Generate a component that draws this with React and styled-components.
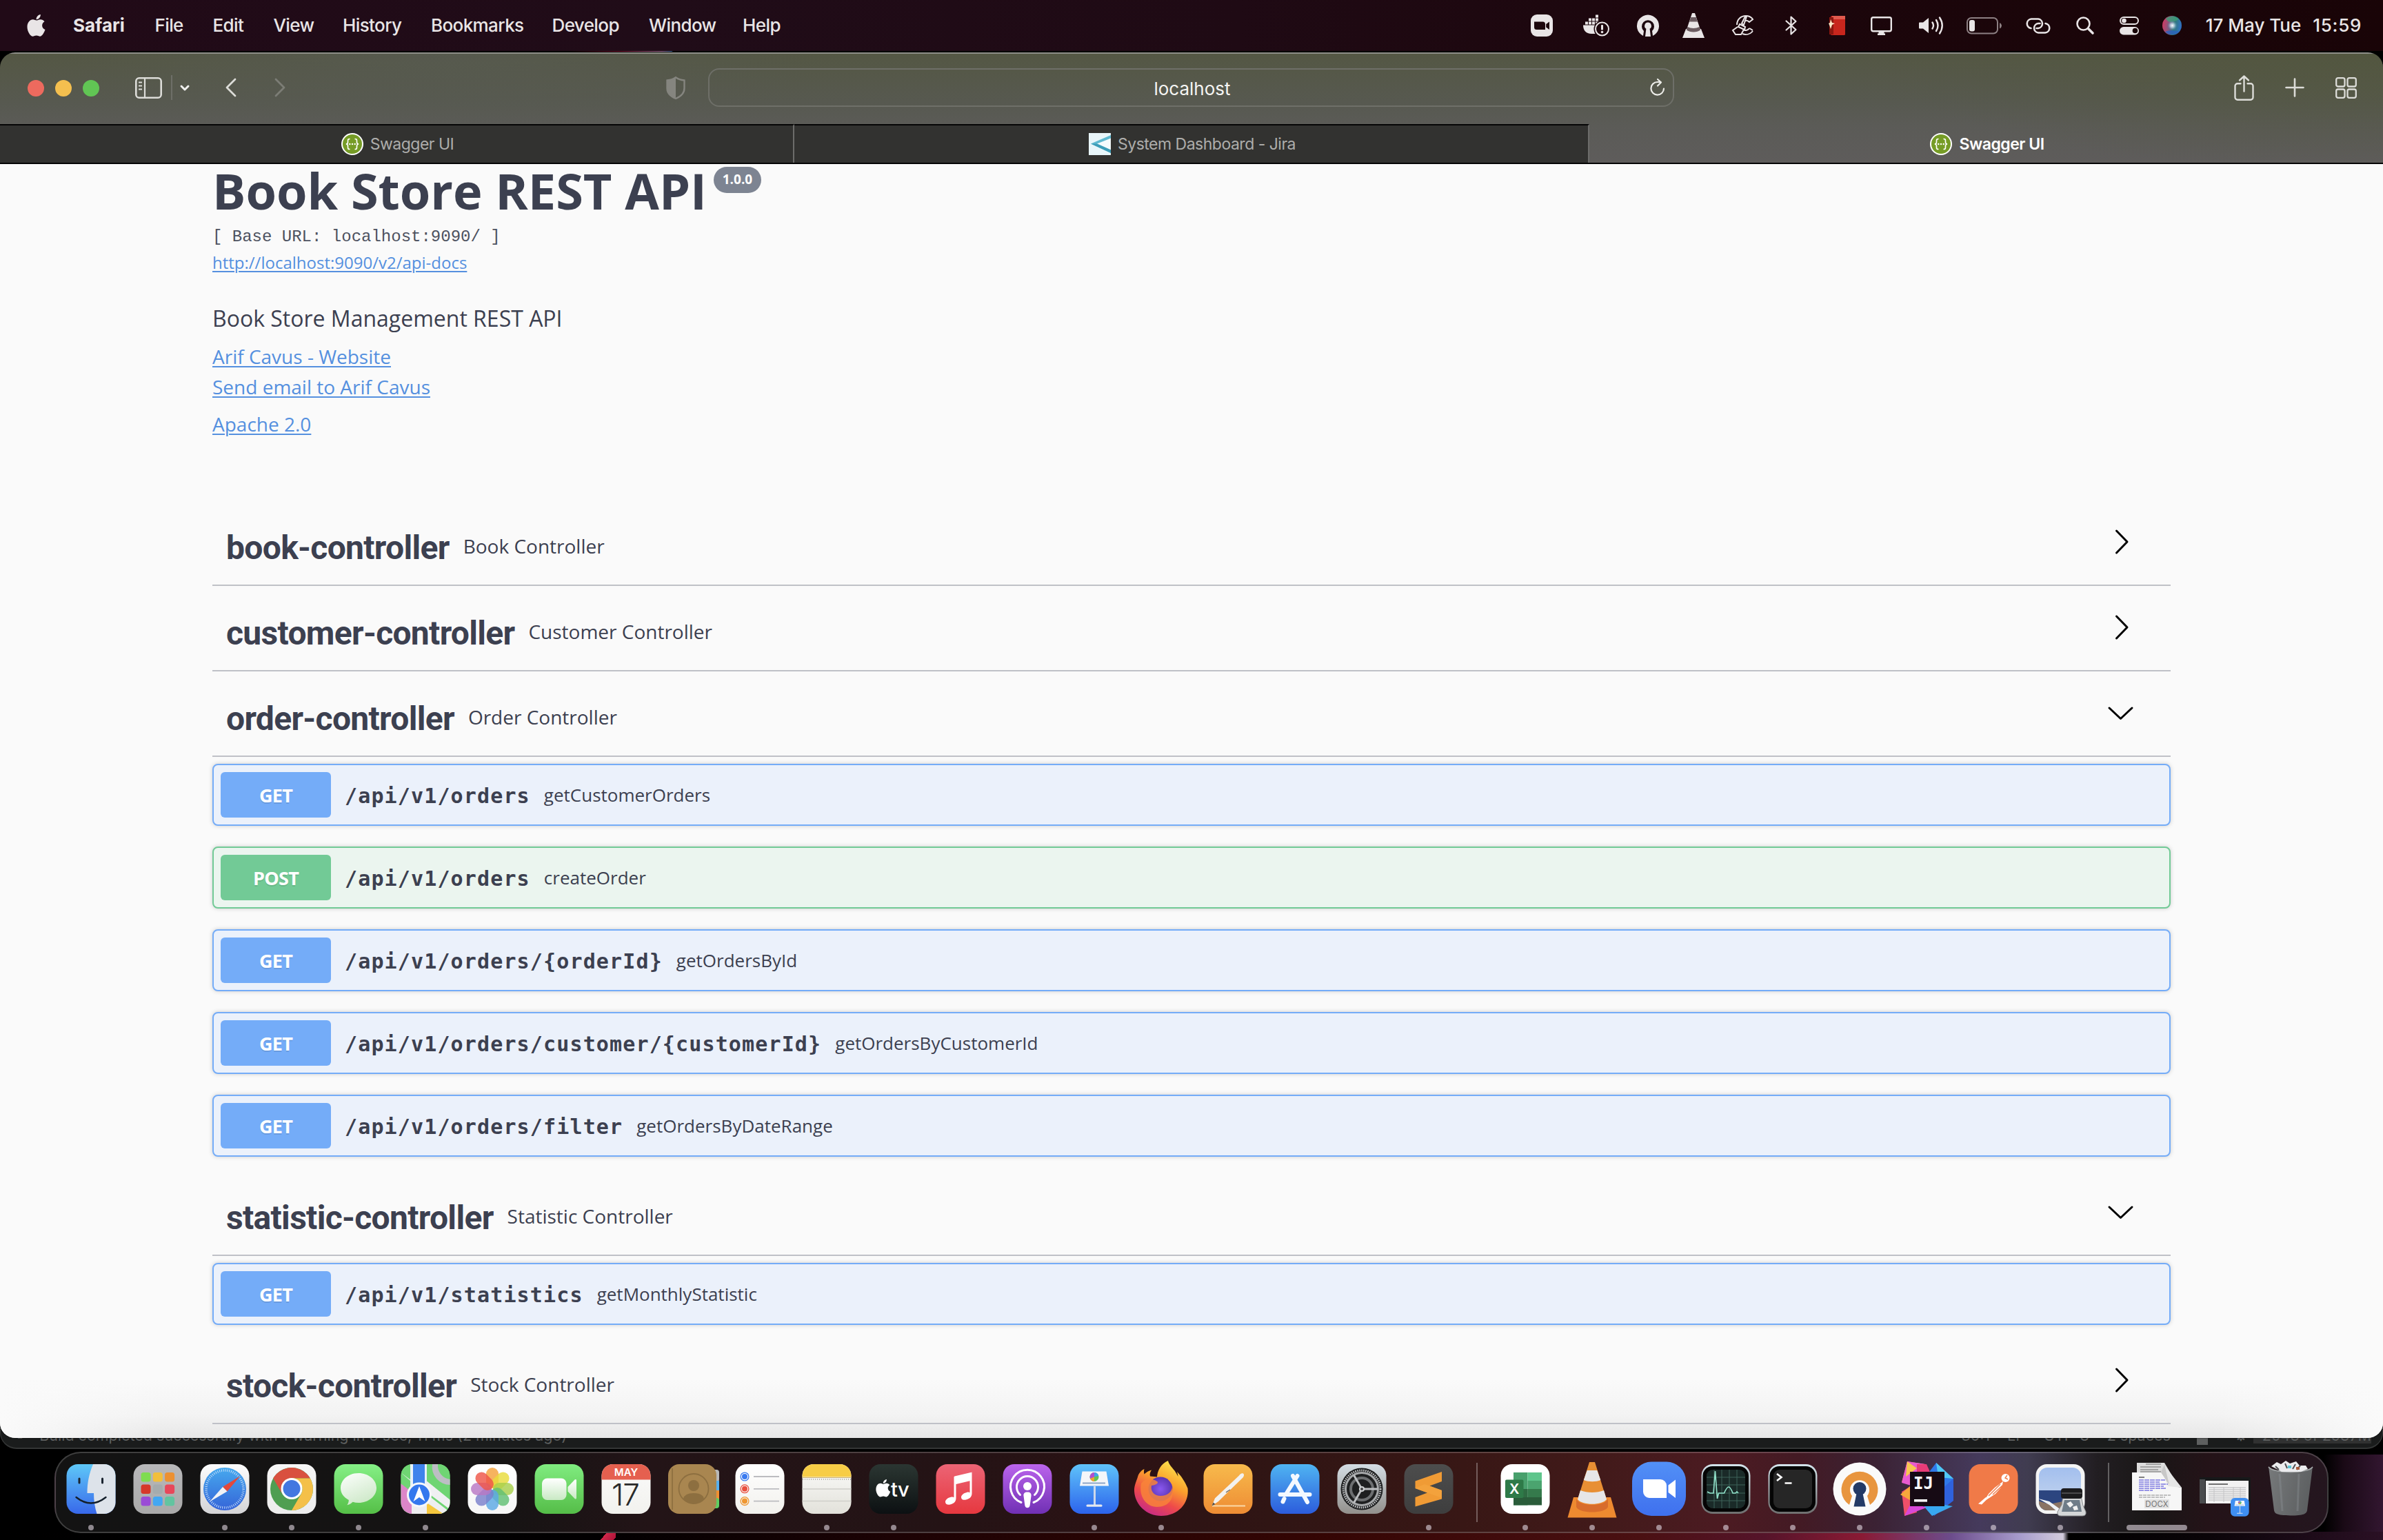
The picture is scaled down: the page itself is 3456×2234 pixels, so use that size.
import React from "react";
import styled, { createGlobalStyle } from "styled-components";

const ui = `Inter, "Liberation Sans", sans-serif`;
const body = `"Open Sans", "Noto Sans", sans-serif`;
const mono = `"DejaVu Sans Mono", "Liberation Mono", monospace`;
const ink = "#3c4050";

const Global = createGlobalStyle`
  *, *::before, *::after { box-sizing: border-box; }
  html, body { margin: 0; padding: 0; background: #000; overflow: hidden; }
  svg { display: block; overflow: visible; flex: none; }
`;

/* ---------- desktop ---------- */

const Desktop = styled.div`
  width: 3456px;
  height: 2234px;
  display: flex;
  flex-direction: column;
  overflow: hidden;
  font-family: ${ui};
  background:
    linear-gradient(128deg, transparent 50%, #d0284a 50%, #b0143a 90%, transparent 90%) 857px 2222px / 36px 14px no-repeat,
    linear-gradient(90deg, #000 0, #020001 880px, #1c0204 1300px, #330503 1900px, #4a1012 2380px, #55142a 2560px, #8a1a34 2700px, #6c4c8c 2830px, #a79ccc 2930px, #d2cbdc 2992px, #000 3000px, #0a0408 3200px, #2a1024 3456px) 0 2222px / 100% 12px no-repeat,
    linear-gradient(90deg, rgba(0,0,0,0) 3370px, #1a0a16 3400px, #321630 3456px) 0 2110px / 100% 124px no-repeat,
    linear-gradient(90deg, transparent 820px, #7a1830 900px, #a8789c 960px, #4070a0 974px, transparent 976px) 0 74px / 100% 1px no-repeat,
    #000;
`;

/* ---------- menu bar ---------- */

const MenuBar = styled.header`
  height: 74px;
  flex: none;
  display: flex;
  align-items: center;
  color: #e9e5e6;
  background: linear-gradient(90deg, #210a17 0%, #200c18 28%, #1f0a14 52%, #1c060c 72%, #190407 100%);
`;
const AppleSlot = styled.div`width: 106px; padding-left: 39px; flex: none;`;
const MenuItem = styled.div`
  width: ${(p) => p.$w}px;
  flex: none;
  font-size: 26px;
  line-height: 32px;
  font-weight: ${(p) => (p.$bold ? 700 : 500)};
  letter-spacing: ${(p) => (p.$bold ? 0 : -0.6)}px;
  white-space: nowrap;
`;
const StatusArea = styled.div`margin-left: auto; display: flex; align-items: center; padding-right: 31px;`;
const Status = styled.div`margin-right: ${(p) => p.$gap}px; flex: none;`;
const Clock = styled.div`
  display: flex;
  gap: 17px;
  font-size: 26px;
  line-height: 32px;
  font-weight: 500;
  white-space: pre;
`;
const Time = styled.span`letter-spacing: 0.7px;`;

/* ---------- browser window ---------- */

const Window = styled.main`
  margin-top: 2px;
  height: 2010px;
  flex: none;
  position: relative;
  z-index: 1;
  display: flex;
  flex-direction: column;
  border-radius: 22px;
  overflow: hidden;
  box-shadow: 0 0 2px #000;
`;
const Chrome = styled.div`
  height: 162px;
  flex: none;
  display: flex;
  flex-direction: column;
  border-top: 2px solid #8e8e88;
  border-bottom: 2px solid #050505;
  background:
    radial-gradient(ellipse 560px 130px at 640px 0, rgba(88, 91, 84, 0.6), transparent),
    radial-gradient(ellipse 700px 170px at 3420px 0, rgba(82, 86, 62, 0.75), transparent),
    linear-gradient(180deg, #545744 0, #575950 45%, #5b5b57 66%, #5e5c5b 100%);
`;
const Toolbar = styled.div`
  height: 102px;
  flex: none;
  display: flex;
  align-items: center;
  padding: 0 38px 4px 40px;
`;
const Lights = styled.div`display: flex; gap: 16px; margin-right: 52px; padding-top: 2px;`;
const Light = styled.span`width: 24px; height: 24px; border-radius: 50%; background: ${(p) => p.$c};`;
const Tool = styled.div`margin-right: ${(p) => p.$gap || 0}px; flex: none;`;
const Rule = styled.span`width: 2px; height: 36px; background: #6e6f68; margin-right: 11px;`;
const Address = styled.div`
  width: 1401px;
  height: 56px;
  flex: none;
  border: 2px solid #6e6f68;
  border-radius: 16px;
  display: grid;
  grid-template-columns: 60px 1fr 57px;
  align-items: center;
  font-size: 26px;
  color: #f4f4f2;
  text-align: center;
`;
const Host = styled.span`padding: 3px 0 0 0;`;
const Reload = styled.div`justify-self: end; padding-right: 11px;`;
const RightTools = styled.div`margin-left: auto; display: flex; align-items: center;`;

const Tabs = styled.nav`height: 56px; flex: none; display: grid; grid-template-columns: 1152px 1153px 1fr;`;
const Tab = styled.div`
  display: flex;
  align-items: center;
  justify-content: center;
  gap: 10px;
  padding-left: 3px;
  font-size: 23px;
  letter-spacing: -0.5px;
  color: ${(p) => (p.$active ? "#fff" : "#adadab")};
  font-weight: ${(p) => (p.$active ? 600 : 400)};
  background: ${(p) => (p.$active ? "transparent" : "#323230")};
  border-top: 2px solid ${(p) => (p.$active ? "transparent" : "#050505")};
  border-right: ${(p) => (p.$active ? 0 : 2)}px solid #6c6c6a;
`;

/* ---------- page ---------- */

const Page = styled.div`
  flex: 1;
  padding: 0 308px;
  color: ${ink};
  font-family: ${body};
  background:
    linear-gradient(90deg, #fafafa 0, rgba(250, 250, 250, 0) 240px, rgba(250, 250, 250, 0) 3216px, #fafafa 3456px),
    linear-gradient(180deg, #fafafa calc(100% - 84px), #f3f3f3 calc(100% - 34px), #e7e7e7 100%);
`;
const Info = styled.section`height: 498px; display: flex; flex-direction: column; align-items: flex-start;`;
const TitleRow = styled.div`display: flex; align-items: flex-start; height: 76px;`;
const Title = styled.h1`margin: 0; font-size: 72px; line-height: 76px; font-weight: 700;`;
const Version = styled.span`
  margin: 4px 0 0 10px;
  width: 69px;
  height: 38px;
  border-radius: 19px;
  background: #7d8492;
  color: #fff;
  font-size: 19px;
  line-height: 37px;
  font-weight: 700;
  text-align: center;
`;
const BaseUrl = styled.pre`
  margin: 12px 0 0;
  font-family: "Liberation Mono", monospace;
  font-size: 24px;
  line-height: 36px;
  color: #4d5260;
`;
const Link = styled.a`
  margin-top: ${(p) => p.$mt || 0}px;
  font-size: ${(p) => p.$size || 28}px;
  line-height: ${(p) => p.$lh || 44}px;
  color: #5590df;
  text-decoration: underline;
  text-decoration-thickness: 2px;
  text-underline-offset: 3px;
`;
const Description = styled.p`margin: 41px 0 11px; font-size: 32px; line-height: 44px;`;

const TagHeader = styled.div`
  height: 114px;
  display: flex;
  align-items: flex-start;
  padding: 0 52px 0 20px;
  border-bottom: 2px solid #bfc1c7;
  margin-bottom: 10px;
`;
const TagName = styled.h3`
  margin: 29px 0 0;
  font-family: Roboto, "Open Sans", sans-serif;
  font-size: 48px;
  line-height: 60px;
  font-weight: 700;
  letter-spacing: -0.68px;
`;
const TagText = styled.p`flex: 1; margin: 26px 0 0 20px; font-size: 28px; line-height: 60px;`;
const Arrow = styled.div`margin-top: 30px;`;

const Operation = styled.div`
  height: 90px;
  margin-bottom: 30px;
  padding: 0 10px;
  display: flex;
  align-items: center;
  border: 2px solid ${(p) => (p.$post ? "#72ca96" : "#74acf8")};
  border-radius: 8px;
  background: ${(p) => (p.$post ? "#ebf5ef" : "#ebf1fb")};
  box-shadow: 0 0 6px rgba(0, 0, 0, 0.19);
`;
const Method = styled.span`
  width: 160px;
  height: 66px;
  border-radius: 6px;
  flex: none;
  background: ${(p) => (p.$post ? "#72ca96" : "#74acf8")};
  color: #fff;
  font-size: 27px;
  line-height: 67px;
  font-weight: 700;
  letter-spacing: -0.7px;
  text-align: center;
  text-shadow: 0 2px 0 rgba(0, 0, 0, 0.1);
`;
const Path = styled.span`
  padding: 4px 20px 0;
  font-family: ${mono};
  font-size: 30px;
  letter-spacing: 1.14px;
  line-height: 40px;
  font-weight: 700;
  white-space: pre;
`;
const Summary = styled.span`font-size: 26px; line-height: 40px;`;

/* ---------- window behind ---------- */

const Behind = styled.div`
  height: 56px;
  margin-top: -40px;
  flex: none;
  display: flex;
  align-items: flex-end;
  padding: 0 16px 6px 22px;
  overflow: hidden;
  background: #1a1c1c;
  border: 1px solid #3a3c3c;
  border-bottom: 2px solid #343636;
  border-radius: 0 0 24px 24px;
  color: #5e6060;
  font-size: 21.5px;
  line-height: 24px;
  white-space: pre;
`;
const BehindCell = styled.span`margin-right: ${(p) => p.$gap || 0}px;`;
const Spacer = styled.span`flex: 1;`;
const Lock = styled.span`width: 16px; height: 12px; background: #5e6060; margin: 0 38px -2px 38px;`;
const Memory = styled.span`height: 24px; background: #303131; padding-left: 13px; margin-left: 8px;`;

/* ---------- dock ---------- */

const Dock = styled.footer`
  width: 3298px;
  height: 118px;
  margin: 4px auto 0;
  flex: none;
  display: flex;
  justify-content: center;
  padding-right: 2px;
  border: 2px solid rgba(255, 255, 255, 0.19);
  border-radius: 38px;
  background: linear-gradient(90deg, #131313 0, #151313 640px, #231417 860px, #241315 1300px, #2c1214 1560px, #301514 1760px, #381715 2040px, #421a1a 2240px, #4c1b22 2420px, #431a24 2530px, #3b2234 2640px, #453a5c 2790px, #403c50 2860px, #221e22 2960px, #191616 3040px, #241318 3120px, #24161f 3298px);
`;
const DockItem = styled.div`
  width: 97px;
  display: flex;
  flex-direction: column;
  align-items: center;
  padding-top: 16px;
`;
const Dot = styled.span`
  width: ${(p) => (p.$wide ? 88 : 8)}px;
  height: 8px;
  margin-top: 16px;
  border-radius: 4px;
  background: rgba(225, 215, 225, 0.6);
`;
const DockRule = styled.div`width: 2px; height: 86px; margin: 14px 21px 0 20px; background: rgba(255, 255, 255, 0.3);`;

/* ---------- menu bar icons ---------- */

const M = "#e9e5e6";

const Apple = ({ w = 27, h = 33, c = M }) => (
  <svg width={w} height={h} viewBox="0 0 27 33">
    <path fill={c} d="M13.800 8.600c1.600 0 3.400-1.500 6-1.400 2.300.1 4.300 1.100 5.700 3-4.900 3.100-4.300 9.600 1 11.900-1 3-4 9.600-7.500 9.700-2 0-2.800-1.200-5.200-1.200s-3.300 1.200-5.200 1.200C5 31.900.5 24.500.5 18c0-6.700 4.100-10.600 8.100-10.700 2.300 0 3.900 1.300 5.200 1.300zM13.600 7.300C13.300 3.800 16.400.4 19.800 0c.4 3.700-2.900 7.200-6.200 7.300z" />
  </svg>
);
const ZoomStatus = () => (
  <svg width="32" height="32">
    <rect width="32" height="32" rx="9" fill={M} />
    <path d="M5 10.500h12.500a3.500 3.500 0 0 1 3.500 3.500v8H8.500A3.500 3.500 0 0 1 5 18.500zM27 10.500v11.500l-4.800-3.600v-4.300z" fill="#1c060c" />
  </svg>
);
const Docker = () => (
  <svg width="38" height="32" fill={M}>
    <path d="M0 15.500h22c-4 4-4 8-2 12.500H12C4 28 0 23 0 15.500z" />
    {[[3, 10.5], [8, 10.5], [13, 10.5], [8, 5.5], [13, 5.5], [18, 5.5], [18, 0.5], [18, 10.5]].map(([x, y]) => (
      <rect key={x + "-" + y} x={x} y={y} width="4" height="4" />
    ))}
    <circle cx="27.500" cy="21" r="12" fill="#1c060c" />
    <circle cx="27.500" cy="21" r="9.500" fill="none" stroke={M} strokeWidth="2" />
    <rect x="26" y="15" width="3" height="7.500" rx="1" />
    <circle cx="27.500" cy="25.500" r="1.800" />
  </svg>
);
const Vpn = () => (
  <svg width="32" height="32" fill={M}>
    <path d="M9 31A16 16 0 1 1 23 31L22 24a9 9 0 1 0-12 0z" />
    <path d="M16 11.500a5 5 0 0 1 2.600 9.200L20 32h-8l1.400-11.300A5 5 0 0 1 16 11.500z" />
  </svg>
);
const Cone = () => (
  <svg width="32" height="36">
    <path d="M5 23h22l5 13H0z" fill={M} />
    <path d="M14 0h4l8 24c-5 4-15 4-20 0z" fill={M} />
    <path d="M12.300 6h7.400l2.300 6.500H10zM7.500 20c5 2.500 12 2.500 17 0l1.600 4.500c-5 4-15 4-20.200 0z" fill="#6b5b60" />
  </svg>
);
const Cleaner = () => (
  <svg width="32" height="30" fill="none" stroke={M} strokeWidth="2">
    <path d="M7 14C7 6 13 1 20 1c4 0 8 2 10 5l-5 4c-2-2-5-3-7-1M30 23c-4 5-10 6-15 4M25 19l5 3M16 21c3 2 7 1 9-2" />
    <path d="M19 2l-5 10 3 2 4-12zM11 13l8 4-1 4-9-4zM8 17l-7 5 4 6h8l4-7" />
  </svg>
);
const Bluetooth = () => (
  <svg width="17" height="28" fill="none" stroke={M} strokeWidth="2.200" strokeLinejoin="round" strokeLinecap="round">
    <path d="M1.500 7.500l14 12.500-7 6.500v-25l7 6.500-14 12.500" />
  </svg>
);
const RedBook = () => (
  <svg width="24" height="30">
    <rect x="3" y="1" width="21" height="28" rx="1.500" fill="#c8261d" />
    <rect x="5" y="1" width="19" height="5" fill="#e05a4e" />
    <rect x="1" y="3" width="6" height="25" fill="#8c1710" />
    <path d="M3 6l2 5 4 1-4 2-2 6-2-6-1-2 2-1z" fill="#fbe9c8" />
  </svg>
);
const Display = () => (
  <svg width="31" height="27">
    <rect x="1.200" y="1.200" width="28.600" height="20" rx="2.500" fill="none" stroke={M} strokeWidth="2.400" />
    <path d="M11.500 21h8v3.500h1.500V27h-11v-2.500h1.500z" fill={M} />
  </svg>
);
const Speaker = () => (
  <svg width="36" height="26" fill="none" stroke={M} strokeWidth="2.400" strokeLinecap="round">
    <path d="M2 8.500h5L15 2v22l-8-6.500H2a1 1 0 0 1-1-1v-7a1 1 0 0 1 1-1z" fill={M} stroke="none" />
    <path d="M20.500 8.500q3 4.500 0 9M26 5q5 8 0 16M31 1.500q7.500 11.500 0 23" />
  </svg>
);
const Battery = () => (
  <svg width="51" height="25">
    <rect x="1" y="1" width="44" height="22.500" rx="6" fill="none" stroke="#8d8083" strokeWidth="2" />
    <rect x="4" y="4" width="8" height="16.500" rx="3" fill={M} />
    <path d="M48 8v8.500q3-1.500 3-4.200T48 8z" fill="#8d8083" />
  </svg>
);
const Chain = () => (
  <svg width="36" height="23" fill="none" stroke={M} strokeWidth="2.600" strokeLinecap="round">
    <path d="M7.500 15A6.800 6.800 0 0 1 8 1.500h10a6.800 6.800 0 0 1 0 13.500h-2.500" />
    <path d="M28.500 8A6.800 6.800 0 0 1 28 21.500H18A6.800 6.800 0 0 1 18 8h2.500" />
  </svg>
);
const Search = () => (
  <svg width="26" height="26" fill="none" stroke={M} strokeLinecap="round">
    <circle cx="10.500" cy="10.500" r="9" strokeWidth="2.600" />
    <path d="M17.500 17.500l6.500 6.500" strokeWidth="3.600" />
  </svg>
);
const Controls = () => (
  <svg width="28" height="26">
    <rect x="1" y="1" width="26" height="10" rx="5" fill="none" stroke={M} strokeWidth="2" />
    <circle cx="6.500" cy="6" r="3.300" fill={M} />
    <rect y="15" width="28" height="11.500" rx="5.700" fill={M} />
    <circle cx="22.500" cy="20.500" r="3.800" fill="#190407" />
  </svg>
);
const Siri = () => (
  <svg width="28" height="28">
    <defs>
      <radialGradient id="siri"><stop offset="0" stopColor="#fff" /><stop offset="0.400" stopColor="#c4dcee" stopOpacity="0.700" /><stop offset="1" stopColor="#2a5a90" stopOpacity="0" /></radialGradient>
      <linearGradient id="siri2" x1="0" y1="0.400" x2="1" y2="0.600"><stop offset="0" stopColor="#d03a64" /><stop offset="0.400" stopColor="#7b5c80" /><stop offset="0.600" stopColor="#2f7c74" /><stop offset="1" stopColor="#2f6ecb" /></linearGradient>
    </defs>
    <circle cx="14" cy="14" r="14" fill="url(#siri2)" />
    <path d="M5 4a14 14 0 0 1 19 1q-8 4-12 4t-7-5z" fill="#3f9c78" opacity=".8" />
    <path d="M4 23q10-4 20 0a14 14 0 0 1-20 0z" fill="#2a62c0" opacity=".8" />
    <circle cx="14.500" cy="14" r="8" fill="url(#siri)" />
  </svg>
);

/* ---------- toolbar icons ---------- */

const T = "#dcdcd8";
const SidebarIcon = () => (
  <svg width="39" height="31" fill="none" stroke={T} strokeWidth="2.600">
    <rect x="1.300" y="1.300" width="36.400" height="28.400" rx="4.500" />
    <path d="M14 1v29M5 7.500h5M5 12.500h5M5 17.500h5" strokeWidth="2.200" />
  </svg>
);
const SmallDown = () => (
  <svg width="14" height="9" fill="none" stroke="#f0f0ee" strokeWidth="3" strokeLinecap="round" strokeLinejoin="round"><path d="M2 2l5 5 5-5" /></svg>
);
const Chev = ({ flip, c }) => (
  <svg width="16" height="28" fill="none" stroke={c} strokeWidth="2.800" strokeLinecap="round" strokeLinejoin="round">
    <path d={flip ? "M2 2l12 12L2 26" : "M14 2L2 14l12 12"} />
  </svg>
);
const Shield = () => (
  <svg width="28" height="33">
    <path d="M14 1.300C10.500 4 6 5.200 1.500 5.500V17c0 7 5 12 12.500 15 7.500-3 12.500-8 12.500-15V5.500C22 5.200 17.500 4 14 1.300z" fill="none" stroke="#85857f" strokeWidth="2.400" />
    <path d="M14 1.300C10.500 4 6 5.200 1.500 5.500V17c0 7 5 12 12.500 15z" fill="#85857f" />
  </svg>
);
const ReloadIcon = () => (
  <svg width="22" height="26" fill="none" stroke="#ecece8" strokeWidth="2.200" strokeLinecap="round" strokeLinejoin="round">
    <path d="M20 14.500A9.300 9.300 0 1 1 10.800 5h5M11 1l5 4.500-5 5" />
  </svg>
);
const Share = () => (
  <svg width="29" height="37" fill="none" stroke={T} strokeWidth="2.400" strokeLinecap="round" strokeLinejoin="round">
    <path d="M9.500 12.200H5A3.500 3.500 0 0 0 1.500 15.700v16.500A3.500 3.500 0 0 0 5 35.700h19a3.500 3.500 0 0 0 3.500-3.500V15.700a3.500 3.500 0 0 0-3.500-3.500h-4.500M14.500 23.500V1.500M8 7.500l6.500-6 6.500 6" />
  </svg>
);
const Plus = () => (
  <svg width="28" height="28" stroke={T} strokeWidth="2.600" strokeLinecap="round"><path d="M14 1.500v25M1.500 14h25" /></svg>
);
const Grid = () => (
  <svg width="31" height="31" fill="none" stroke={T} strokeWidth="2.300">
    {[[1.2, 1.2], [17.5, 1.2], [1.2, 17.5], [17.5, 17.5]].map(([x, y]) => <rect key={x + "," + y} x={x} y={y} width="12.300" height="12.300" rx="2.500" />)}
  </svg>
);
const SwaggerIcon = () => (
  <svg width="32" height="32">
    <circle cx="16" cy="16" r="16" fill="#fff" />
    <circle cx="16" cy="16" r="14" fill="#769c26" />
    <path d="M12.500 8.500c-3 0-3 1-3 3.500s0 3.500-2.500 4c2.500.5 2.500 1.500 2.500 4s0 3.500 3 3.500M19.500 8.500c3 0 3 1 3 3.500s0 3.500 2.500 4c-2.500.5-2.500 1.500-2.500 4s0 3.500-3 3.500" fill="none" stroke="#fff" strokeWidth="1.700" />
    <g fill="#fff"><circle cx="12.300" cy="16" r="1.200" /><circle cx="16" cy="16" r="1.200" /><circle cx="19.700" cy="16" r="1.200" /></g>
  </svg>
);
const JiraIcon = () => (
  <svg width="32" height="32">
    <rect width="32" height="32" fill="#e9f6fa" />
    <path d="M32 3L3 15.500 32 29z" fill="#5fb9d0" />
    <path d="M32 7.500L12 15.500 32 24.500z" fill="#f5fbfd" />
    <path d="M3 15.500L32 29v-4.500L12 15.500z" fill="#3d9db8" />
  </svg>
);
const TagArrow = ({ open }) => (
  <svg width="40" height="40" fill="none" stroke="#000" strokeWidth="3" strokeLinecap="round" strokeLinejoin="round">
    <path d={open ? "M3 13l16.500 15.500L36 13" : "M13.500 4l15.500 16-15.500 16"} />
  </svg>
);

/* ---------- dock icons, each on a 72 x 72 tile ---------- */

const LG = ({ id, from, to, x2 = 0, y2 = 1 }) => (
  <linearGradient id={id} x1="0" y1="0" x2={x2} y2={y2}><stop offset="0" stopColor={from} /><stop offset="1" stopColor={to} /></linearGradient>
);
const Tile = ({ id, from, to = from, children }) => (
  <svg width="72" height="72" viewBox="0 0 72 72">
    <defs>
      <LG id={id} from={from} to={to} />
      <clipPath id={id + "c"}><rect x="0.500" width="71" height="72" rx="16.500" /></clipPath>
    </defs>
    <g clipPath={`url(#${id}c)`}>
      <rect width="72" height="72" fill={`url(#${id})`} />
      {children}
    </g>
  </svg>
);
const Free = ({ children }) => <svg width="72" height="72" viewBox="0 0 72 72">{children}</svg>;

const Finder = () => (
  <Tile id="finder" from="#5ec8f8" to="#3868ea">
    <path d="M39 0C33 14 30.500 28 30.500 42H40c0 11 1.500 21 4.500 30H72V0z" fill="#dde3ea" />
    <path d="M19 21v6M52.500 21v6" stroke="#1a2430" strokeWidth="3" strokeLinecap="round" />
    <path d="M14.500 48q21.500 17 43 0" stroke="#14202c" strokeWidth="2.400" fill="none" strokeLinecap="round" />
  </Tile>
);
const Launchpad = () => (
  <Tile id="lp" from="#b8b8ba" to="#aaaaaa">
    {["#7fdc50", "#f2bf3c", "#ec9132", "#d6382a", "#a5abad", "#e8475a", "#9a4bd6", "#43a7f2", "#62c4a0"].map((c, i) => (
      <rect key={c} x={11.5 + (i % 3) * 17.3} y={12 + Math.floor(i / 3) * 17.5} width="14" height="13.500" rx="3.500" fill={c} />
    ))}
  </Tile>
);
const SafariIcon = () => (
  <Tile id="sf" from="#fdfdfd" to="#d4d4d6">
    <defs><LG id="sf2" from="#46a9ee" to="#3564d8" /></defs>
    <circle cx="36" cy="36" r="31" fill="url(#sf2)" />
    <circle cx="36" cy="36" r="27" fill="none" stroke="#cfe3fa" strokeWidth="3.500" strokeDasharray="0.900 1.930" />
    <path d="M58.500 17L39.500 39.500 33 33z" fill="#e3483b" />
    <path d="M14 54.500L33 33l6.500 6.500z" fill="#f1f3f6" />
  </Tile>
);
const ChromeIcon = () => (
  <Tile id="ch" from="#f6f6f6" to="#ececec">
    <circle cx="36" cy="36" r="31" fill="#4f9e52" />
    <path d="M9.200 20.500A31 31 0 0 1 62.800 20.500H36a15.500 15.500 0 0 0-13.400 23.200z" fill="#d9503f" />
    <path d="M62.800 20.500A31 31 0 0 1 36 67l13.400-23.200A15.500 15.500 0 0 0 36 20.500z" fill="#f4c049" />
    <circle cx="36" cy="35.500" r="15.500" fill="#fff" />
    <circle cx="36" cy="35.500" r="12.500" fill="#4377e0" />
  </Tile>
);
const Messages = () => (
  <Tile id="ms" from="#85f086" to="#55bf47">
    <defs><LG id="ms2" from="#fdfffd" to="#cfe9ca" x2={0.5} /></defs>
    <path d="M36 13c14.500 0 26 9.600 26 21.500S50.500 56 36 56c-3 0-5.800-.4-8.400-1.200-2.200 2.400-5 4-8.300 4.500 1.600-2.200 2.500-4.700 2.500-7.400C14 48 10 41.700 10 34.500 10 22.600 21.500 13 36 13z" fill="url(#ms2)" />
  </Tile>
);
const Maps = () => (
  <Tile id="mp" from="#66cf6a">
    <path d="M0 0h72v72H0z" fill="#6fd573" />
    <path d="M0 12L72 66v-14L30 18V0H14v24L0 12z" fill="#f0f0f2" />
    <path d="M0 28l16 12v32H0z" fill="#dc86c8" />
    <path d="M16 42h20l36 28v2H16z" fill="#eeeef0" />
    <path d="M38 56l24 16H38z" fill="#f5c73e" />
    <path d="M72 30A26 26 0 0 1 46 0h8a20 20 0 0 0 18 22z" fill="#bdbec4" />
    <path d="M18 0v60h17V0z" fill="#3f83ec" />
    <path d="M14 0h4v40h-4zM35 0h3v34h-3z" fill="#e8f0f8" />
    <circle cx="27" cy="44.500" r="18" fill="#f5f7fa" />
    <circle cx="27" cy="44.500" r="15" fill="#3478ee" />
    <path d="M27 32l8.500 22-8.500-6-8.500 6z" fill="#fff" />
  </Tile>
);
const Photos = () => (
  <Tile id="ph" from="#ffffff" to="#f6f6f6">
    {["#f4a23c", "#e8dc3c", "#a8d04c", "#62bf74", "#5ca8e4", "#7a80cc", "#b878c4", "#ee5548"].map((c, i) => (
      <rect key={c} x="27" y="5" width="18" height="30" rx="9" fill={c} opacity=".82" transform={`rotate(${i * 45} 36 36)`} />
    ))}
  </Tile>
);
const FaceTime = () => (
  <Tile id="ft" from="#80ec80" to="#55bd48">
    <defs><LG id="ft2" from="#fff" to="#c9e9c4" /></defs>
    <rect x="11" y="20.500" width="35.500" height="31.500" rx="7.500" fill="url(#ft2)" />
    <path d="M48.500 33l10-10.500c1.200-1 2.500-.5 2.500 1v25.500c0 1.500-1.300 2-2.500 1l-10-10.500z" fill="url(#ft2)" />
  </Tile>
);
const Calendar = () => (
  <Tile id="cal" from="#fafafa" to="#f2f2ee">
    <rect width="72" height="22.500" fill="#e5604f" />
    <text x="36" y="17" textAnchor="middle" fontFamily={ui} fontSize="15" fontWeight="600" fill="#fff">MAY</text>
    <text x="35" y="60" textAnchor="middle" fontFamily={ui} fontSize="44" fontWeight="300" letterSpacing="-1" fill="#2a2a2a">17</text>
  </Tile>
);
const Contacts = () => (
  <Free>
    <rect x="58" y="8" width="16" height="18" rx="4" fill="#b9b9b9" />
    <rect x="58" y="24" width="16" height="15" fill="#58b0ee" />
    <rect x="58" y="38" width="16" height="14" fill="#f09032" />
    <rect x="58" y="49" width="16" height="15" rx="4" fill="#5fce62" />
    <rect x="0" width="70" height="72" rx="16" fill="#a98650" />
    <path d="M6 6v60" stroke="#8a6b3c" strokeWidth="1.500" />
    <circle cx="37" cy="35.500" r="21.500" fill="none" stroke="#8d6f40" strokeWidth="1.800" />
    <circle cx="37" cy="31" r="8" fill="#8d6f40" />
    <path d="M22 50q2-8 15-8t15 8q-6 7.500-15 7.500T22 50z" fill="#8d6f40" />
  </Free>
);
const Reminders = () => (
  <Tile id="rm" from="#ffffff" to="#f2f1ed">
    {["#3a7bf0", "#e8503f", "#ef9732"].map((c, i) => (
      <g key={c}>
        <circle cx="14" cy={18 + i * 17.8} r="5.900" fill="none" stroke={c} strokeWidth="1.300" />
        <circle cx="14" cy={18 + i * 17.8} r="4" fill={c} />
        <path d={`M27 ${18 + i * 17.8}h37`} stroke="#bcbcc0" strokeWidth="1.800" />
      </g>
    ))}
  </Tile>
);
const Notes = () => (
  <Tile id="nt" from="#fcfcfa" to="#e2e1da">
    <rect width="72" height="18.500" fill="#f7cd46" />
    <path d="M0 19.500h72" stroke="#c9b27a" strokeWidth="1.200" />
    <path d="M1 22h71" stroke="#b5b4ae" strokeWidth="2" strokeDasharray="1 2" />
    <path d="M0 36h72M0 53.500h72" stroke="#cfcec9" strokeWidth="1.500" />
  </Tile>
);
const TV = () => (
  <Tile id="tv" from="#2b3632" to="#0c1012">
    <g transform="translate(10 22) scale(.8)"><path fill="#fff" d="M13.800 8.600c1.600 0 3.400-1.500 6-1.400 2.300.1 4.300 1.100 5.700 3-4.900 3.100-4.300 9.600 1 11.900-1 3-4 9.600-7.500 9.700-2 0-2.800-1.200-5.200-1.200s-3.300 1.200-5.200 1.200C5 31.900.5 24.500.5 18c0-6.700 4.100-10.600 8.100-10.700 2.300 0 3.900 1.300 5.200 1.300zM13.600 7.300C13.300 3.800 16.400.4 19.800 0c.4 3.700-2.900 7.200-6.200 7.300z" /></g>
    <text x="32" y="47" fontFamily={ui} fontSize="29" fontWeight="500" letterSpacing="-0.500" fill="#fff">tv</text>
  </Tile>
);
const Music = () => (
  <Tile id="mu" from="#ec6475" to="#e6383f">
    <path d="M53 11.500L27.500 17.500c-.7.200-1 .6-1 1.300v29.400c-1-.8-2.500-.9-4.500-.4-4.500 1-8 3.800-8 7 0 3 3 4.600 7 3.700 5-1.100 8.500-4 8.500-9V29l20-4.700v17c-1-.8-2.500-.9-4.500-.4-4.500 1-8 3.800-8 7 0 3 3 4.600 7 3.700 5-1.100 8.500-4 8.500-9V13c0-1.200-.5-1.700-1.500-1.500z" fill="#fff" />
  </Tile>
);
const Podcasts = () => (
  <Tile id="pc" from="#bb64ec" to="#7030b4">
    <g fill="none" stroke="#fff" strokeWidth="3" strokeLinecap="round">
      <path d="M27 55.500a24.500 24.500 0 1 1 18 0" /><path d="M25.500 44.500a15.500 15.500 0 1 1 21 0" />
    </g>
    <circle cx="36" cy="32" r="6" fill="#fff" />
    <path d="M36 40.500c4 0 6 2 5.500 5.500l-1.800 13.500c-.3 2.400-1.500 3.800-3.700 3.800s-3.400-1.400-3.700-3.800L30.500 46c-.5-3.500 1.500-5.500 5.500-5.500z" fill="#fff" />
  </Tile>
);
const KeynoteArt = () => (
  <>
    <path d="M35 32h3v28h-3z" fill="#cdd8ea" /><rect x="24.500" y="58.500" width="23" height="3.200" rx="1.500" fill="#e4e8f0" />
    <path d="M18.500 10.500h35l3.500 21H15z" fill="#f4f6f9" /><path d="M19 27.500h33" stroke="#8ea6c8" strokeWidth="1.800" />
    <circle cx="36" cy="18.500" r="6.500" fill="#62c454" /><path d="M36 18.500V12a6.500 6.500 0 0 1 6.300 5z" fill="#3fa3e8" /><path d="M36 18.500L30 21a6.500 6.500 0 0 1 6-9z" fill="#b04fd0" /><path d="M36 18.500l-6 2.500q2 4 6 4z" fill="#f0a030" />
  </>
);
const Keynote = () => <Tile id="kn" from="#5fc3fa" to="#2c63ec"><KeynoteArt /></Tile>;
const Firefox = () => (
  <Free>
    <defs>
      <linearGradient id="ff" x1=".8" y1="0" x2=".3" y2="1"><stop offset="0" stopColor="#fdec52" /><stop offset=".4" stopColor="#fba02c" /><stop offset=".7" stopColor="#ee4a4a" /><stop offset="1" stopColor="#c62a88" /></linearGradient>
      <radialGradient id="ff2"><stop offset="0" stopColor="#8a58f0" /><stop offset="1" stopColor="#5a35b0" /></radialGradient>
    </defs>
    <path d="M46-5c1 5 5 9 9.500 14.500 2 3 3.500 5.500 5 8.500-.2-2.600-.7-5-1.500-7 6 6 12 15 15.500 24C77 56 61 75 36 75 15 75-2 59-3 39c-.3-8 3-14 5-20.500 1-4 4-9 9.500-11.500-.8 3-.5 5 0 7.500 3-3 6.500-5 10.500-6-2 3-3 6-2 9 3 .2 7 .8 10 1 .5-8 5-19 16-23.500z" fill="url(#ff)" />
    <circle cx="35" cy="36" r="17.500" fill="url(#ff2)" />
    <path d="M7 28c6-8 16-8 23-3 4 3-5 6-8 6-2 9 5 15 13 15 10 0 17-6 17-14 4 18-5 30-22 30C14 62 3 46 7 28z" fill="#f8843a" opacity=".85" />
  </Free>
);
const Pages = () => (
  <Tile id="pg" from="#f7ba4c" to="#ee8c34">
    <path d="M13 60.500h48" stroke="#fbd9a8" strokeWidth="2" />
    <path d="M12.500 60.500l4.500-11L52 16.500c1.500-2.500 4-4 6-3 1.500 1 1.500 3.500-.5 6L22 54z" fill="#f3f1ee" /><path d="M33 41l6-4" stroke="#7c7468" strokeWidth="1.500" /><path d="M12.500 60.500l2-5 3 2.500z" fill="#55504a" />
  </Tile>
);
const AppStore = () => (
  <Tile id="as" from="#4fb4f2" to="#2c5cdc">
    <g stroke="#f4f9ff" strokeWidth="6" strokeLinecap="round"><path d="M39.500 17L23 43.500M33 17l21 38M14.500 44h43" /><path d="M20.500 50l-2 4.500" /></g>
  </Tile>
);
const Settings = () => (
  <Tile id="st" from="#d4dde4" to="#92908c">
    <circle cx="36" cy="36" r="30.500" fill="#1e1f20" />
    <circle cx="36" cy="36" r="27" fill="none" stroke="#c0c2c4" strokeWidth="3" strokeDasharray="1.600 1.400" />
    <circle cx="36" cy="36" r="23.500" fill="none" stroke="#a6a8aa" strokeWidth="3" />
    <circle cx="36" cy="36" r="16" fill="none" stroke="#6c6e70" strokeWidth="4" />
    <path d="M36 36h23M36 36L24.500 16M36 36L24.500 56" stroke="#bcbec0" strokeWidth="3" />
    <circle cx="36" cy="36" r="4" fill="#d0d2d4" /><circle cx="36" cy="36" r="2" fill="#444" />
  </Tile>
);
const Sublime = () => (
  <Tile id="sb" from="#4d4d4d" to="#3e3e3e">
    <path d="M55 11v14L37.500 31.500 55 38v12.500L16.500 61.500V48L34 41.500 16.500 35V24.500z" fill="#f09b35" />
    <path d="M16.500 35L55 49V38L30 29z" fill="#f3a23c" />
  </Tile>
);
const Excel = () => (
  <Tile id="ex" from="#ffffff">
    <rect x="19" y="12" width="20.500" height="47.500" fill="#48a06c" /><rect x="39.500" y="12" width="20.500" height="12" fill="#5fc58c" /><rect x="39.500" y="24" width="20.500" height="12" fill="#4ba46f" /><rect x="39.500" y="36" width="20.500" height="12" fill="#357a4c" /><rect x="19" y="48" width="41" height="11.500" fill="#2a5c3a" /><rect x="19" y="36" width="20.500" height="12" fill="#2e6b42" />
    <rect x="7" y="22.500" width="26.500" height="26.500" rx="2" fill="#2e7a48" />
    <text x="20.200" y="43" textAnchor="middle" fontFamily={ui} fontSize="20" fontWeight="600" fill="#fff">X</text>
  </Tile>
);
const VLC = () => (
  <Free>
    <path d="M9 48h54l8.500 29.500H.5z" fill="#ee8a30" />
    <path d="M13 50c4 12 42 12 46 0v12c-4 10-42 10-46 0z" fill="#d86c2c" />
    <path d="M32-3h8l17 54c-6 9-36 9-42 0z" fill="#e88f34" />
    <path d="M28.700 9h14.600l5 14c-6 3-18 3-24.500 0zM19 38c10 4 24 4 34 0l4 13c-6 9-36 9-42 0z" fill="#e6e6e8" />
  </Free>
);
const ZoomApp = () => (
  <Free>
    <defs><LG id="zm" from="#5290f6" to="#3f70ee" /></defs>
    <rect x="-3" y="-3.500" width="78" height="78.500" rx="28" fill="url(#zm)" />
    <path d="M13 22h25a9 9 0 0 1 9 9v18H22a9 9 0 0 1-9-9zM60 22.500v26.500L49.500 41V30.500z" fill="#fff" />
  </Free>
);
const Device = ({ id, children }) => (
  <Tile id={id} from="#d4e4ec" to="#6e6e6e">
    <rect x="2.500" y="3" width="66.500" height="66" rx="14" fill="#050505" /><rect x="8" y="8" width="56" height="56" rx="9" fill="#262626" />{children}
  </Tile>
);
const Activity = () => (
  <Device id="am">
    <rect x="8" y="8" width="56" height="56" rx="9" fill="#1a2a28" />
    <path d="M8 19h56M8 30h56M8 42h56M8 53h56M19 8v56M30 8v56M41 8v56M52 8v56" stroke="#3c6258" strokeWidth="1" />
    <path d="M9 40l4 2h5l2.500-32L23.500 50l2-8h8q4-9 6.500-9t6 9h4l2-2 2 2" fill="none" stroke="#8fe0c8" strokeWidth="1.700" />
  </Device>
);
const Terminal = () => (
  <Device id="tm"><path d="M13 14l6.500 5-6.500 5" fill="none" stroke="#fff" strokeWidth="2.600" /><path d="M24.500 27.500h10" stroke="#fff" strokeWidth="2.600" /></Device>
);
const OpenVpn = () => (
  <Free>
    <circle cx="36" cy="36" r="38.500" fill="#fafafa" />
    <path d="M21 59A26.500 26.500 0 1 1 51 59L47 46a14 14 0 1 0-22 0z" fill="#e8953f" />
    <circle cx="36" cy="35.500" r="9.500" fill="#233a66" /><path d="M32 40h8l4.500 21.500h-17z" fill="#233a66" />
  </Free>
);
const Idea = () => (
  <Free>
    <path d="M8-4l26 4 4 16-38 10z" fill="#f08a4c" /><path d="M8-4L0 27l20 6L34 0z" fill="#e85bd0" /><path d="M8-4l14 10L6 18z" fill="#f8c850" />
    <path d="M22 0h14l8 18-22 10z" fill="#e83c78" />
    <path d="M50-2l25 23-6 30-24 6-8-42z" fill="#2f78e8" /><path d="M50-2l25 23-22-2z" fill="#50c8f4" />
    <path d="M75 21v32l-28 22-10-20z" fill="#2f62dc" /><path d="M45 56l29 5-30 14-12-14z" fill="#38a8f0" />
    <path d="M0 40l16-10 6 40L4 75z" fill="#f0506a" /><path d="M-2 44l14-12 3 22z" fill="#f8a83c" /><path d="M4 75l10-20 22 8z" fill="#d848d8" />
    <rect x="12" y="11" width="50" height="50" fill="#160a14" />
    <text x="17" y="35.500" fontFamily={mono} fontSize="24" fontWeight="700" fill="#fff">IJ</text>
    <rect x="18" y="51" width="19" height="3.600" fill="#fff" />
  </Free>
);
const Postman = () => (
  <Tile id="pm" from="#f07a48">
    <circle cx="53.500" cy="20" r="6" fill="#fff" />
    <path d="M50 25l-12 9-9 9-7 11 8-5 9-6 7-8 3-5z" fill="#fff" /><path d="M25 48L14 57.500l5 1 9-9z" fill="#fff" />
    <path d="M46 29L29 46M49 31L35 44M56 16l-3 4 4 2" fill="none" stroke="#f07a48" strokeWidth="1.400" />
  </Tile>
);
const Preview = () => (
  <Free>
    <rect x=".5" width="71" height="72" rx="16" fill="#f4f4f4" />
    <defs><clipPath id="pv"><rect x="5" y="5" width="61" height="62" rx="12" /></clipPath><LG id="pv2" from="#a0bdee" to="#b8cdee" /></defs>
    <g clipPath="url(#pv)"><rect width="72" height="40" fill="url(#pv2)" /><rect y="38" width="72" height="34" fill="#2c4580" /><path d="M0 52l20 6 20-4 30 6v12H0z" fill="#8a7464" /><path d="M4 50l16 4 14 10 6 8-6-1-14-12z" fill="#eef2f6" /></g>
    <path d="M40 46h26l3 14 4 9q1 6-5 6H37q-6 0-5-6l6-10z" fill="#d4d6d8" stroke="#8a8c8e" strokeWidth="1" /><path d="M42 52h22l3 17H38z" fill="#6f7c88" /><path d="M45 57l6-3 4 5-5 4zM54 62l6-2 2 6-6 1z" fill="#f2f2f2" />
    <rect x="37" y="35" width="31" height="15" rx="4" fill="#1c1c1e" /><path d="M38 42h29" stroke="#4a4a4c" strokeWidth="2" />
  </Free>
);
const Docs = () => (
  <Free>
    <path d="M7-2h40l18 30v30H7z" fill="#dcdcdc" /><path d="M20 0h22M12 4h30M12 8h26M12 11h30" stroke="#6a6a6a" strokeWidth="1" />
    <path d="M0 12h44l8 18 20 4v33H0z" fill="#f6f6f6" />
    <path d="M44-2L72 34l-20-2z" fill="#e6e6e6" /><path d="M47 0l7 30-12-18z" fill="#c8c8c8" />
    <path d="M10 19h8" stroke="#333" strokeWidth="1.200" />
    <path d="M10 23h38M10 26h30M10 29h42M10 32h36M10 35h40M10 38h20" stroke="#7a76e0" strokeWidth="1.500" strokeDasharray="7 1" />
    <path d="M10 45h46M10 48h38" stroke="#888" strokeWidth="1" strokeDasharray="5 1" />
    <rect x="18" y="51" width="36" height="13" fill="#e2e2e2" />
    <text x="36" y="62" textAnchor="middle" fontFamily={ui} fontSize="11.500" fill="#777">DOCX</text>
  </Free>
);
const MiniWindow = () => (
  <Free>
    <g transform="translate(4 0)">
      <rect x="-3" y="19" width="74" height="38" fill="#17191a" /><rect x="-3" y="22" width="8" height="35" fill="#4a4c4e" />
      <rect x="6" y="24" width="62" height="33" fill="#f2f2f2" /><path d="M10 29h28" stroke="#444" strokeWidth="1.500" />
      <path d="M10 34h54M10 37h54M10 40h54M10 43h54M10 46h54M10 49h54M10 52h54" stroke="#b4b4b6" strokeWidth="1" /><path d="M18 33v22M32 33v22M46 33v22M56 33v22" stroke="#c4c4c6" strokeWidth="1" />
      <g transform="translate(42 49) scale(.37)"><rect width="72" height="72" rx="16" fill="#3f8ff2" /><KeynoteArt /></g>
    </g>
  </Free>
);
const Trash = () => (
  <Free>
    <defs><LG id="tr" from="#7d8182" to="#626667" x2={1} y2={0.3} /></defs>
    <path d="M4 3c6 10 58 10 64 0l-8 64c-1 5-5 7.500-24 7.500S13 72 12 67z" fill="url(#tr)" opacity=".93" />
    <path d="M4 4c6 10 58 10 64 0" fill="none" stroke="#a4a8a9" strokeWidth="1.500" /><path d="M20 14l4 54M48 14l-2 54" stroke="#90959a" strokeWidth="3" opacity=".35" />
    <path d="M8 3l8-6 6 3 7-5 6 4 9-3 5 6 9 0 3 5-10 4-28 0z" fill="#ececee" /><path d="M14 3l5 5M28-1l3 7M43 0l-4 7M50 2l-5 6" stroke="#505054" strokeWidth="2" /><path d="M32 2h5v4h-5z" fill="#5fc8d8" /><path d="M44 4h5v4h-5z" fill="#a85a3c" />
  </Free>
);

/* ---------- data ---------- */

const menus = [["File", 84], ["Edit", 88], ["View", 100.5], ["History", 128], ["Bookmarks", 175.5], ["Develop", 140.5], ["Window", 136], ["Help", 60]];
const statuses = [[ZoomStatus, 44], [Docker, 40], [Vpn, 34], [Cone, 40], [Cleaner, 45], [Bluetooth, 46], [RedBook, 37], [Display, 38], [Speaker, 34], [Battery, 35], [Chain, 37], [Search, 37], [Controls, 34], [Siri, 35]];
const dock = [
  [[Finder, 1], [Launchpad], [SafariIcon, 1], [ChromeIcon, 1], [Messages, 1], [Maps, 1], [Photos], [FaceTime], [Calendar], [Contacts], [Reminders], [Notes, 1], [TV, 1], [Music], [Podcasts], [Keynote, 1], [Firefox, 1], [Pages], [AppStore], [Settings], [Sublime, 1]],
  [[Excel, 1], [VLC, 1], [ZoomApp, 1], [Activity, 1], [Terminal, 1], [OpenVpn, 1], [Idea, 1], [Postman, 1], [Preview, 1]],
  [[Docs, 2], [MiniWindow], [Trash]],
];
const tags = [
  { name: "book-controller", text: "Book Controller" },
  { name: "customer-controller", text: "Customer Controller" },
  {
    name: "order-controller", text: "Order Controller",
    ops: [
      ["GET", "/api/v1/orders", "getCustomerOrders"],
      ["POST", "/api/v1/orders", "createOrder"],
      ["GET", "/api/v1/orders/{orderId}", "getOrdersById"],
      ["GET", "/api/v1/orders/customer/{customerId}", "getOrdersByCustomerId"],
      ["GET", "/api/v1/orders/filter", "getOrdersByDateRange"],
    ],
  },
  { name: "statistic-controller", text: "Statistic Controller", ops: [["GET", "/api/v1/statistics", "getMonthlyStatistic"]] },
  { name: "stock-controller", text: "Stock Controller" },
];

export default function App() {
  return (
    <>
      <Global />
      <Desktop>
        <MenuBar>
          <AppleSlot><Apple /></AppleSlot>
          <MenuItem $w={118.5} $bold>Safari</MenuItem>
          {menus.map(([label, w]) => <MenuItem key={label} $w={w}>{label}</MenuItem>)}
          <StatusArea>
            {statuses.map(([Icon, gap], i) => <Status key={i} $gap={gap}><Icon /></Status>)}
            <Clock><span>17 May Tue</span><Time>15:59</Time></Clock>
          </StatusArea>
        </MenuBar>

        <Window>
          <Chrome>
            <Toolbar>
              <Lights><Light $c="#ed6a5e" /><Light $c="#f4bf4f" /><Light $c="#61c554" /></Lights>
              <Tool $gap={13}><SidebarIcon /></Tool>
              <Rule />
              <Tool $gap={52}><SmallDown /></Tool>
              <Tool $gap={55}><Chev c={T} /></Tool>
              <Tool $gap={552}><Chev flip c="#7c7d76" /></Tool>
              <Tool $gap={33}><Shield /></Tool>
              <Address><span /><Host>localhost</Host><Reload><ReloadIcon /></Reload></Address>
              <RightTools>
                <Tool $gap={45}><Share /></Tool>
                <Tool $gap={45}><Plus /></Tool>
                <Tool><Grid /></Tool>
              </RightTools>
            </Toolbar>
            <Tabs>
              <Tab><SwaggerIcon />Swagger UI</Tab>
              <Tab><JiraIcon />System Dashboard - Jira</Tab>
              <Tab $active><SwaggerIcon />Swagger UI</Tab>
            </Tabs>
          </Chrome>

          <Page>
            <Info>
              <TitleRow><Title>Book Store REST API</Title><Version>1.0.0</Version></TitleRow>
              <BaseUrl>[ Base URL: localhost:9090/ ]</BaseUrl>
              <Link $mt={1} $size={24} $lh={36}>http://localhost:9090/v2/api-docs</Link>
              <Description>Book Store Management REST API</Description>
              <Link>Arif Cavus - Website</Link>
              <Link>Send email to Arif Cavus</Link>
              <Link $mt={10}>Apache 2.0</Link>
            </Info>
            {tags.map((tag) => (
              <section key={tag.name}>
                <TagHeader>
                  <TagName>{tag.name}</TagName>
                  <TagText>{tag.text}</TagText>
                  <Arrow><TagArrow open={!!tag.ops} /></Arrow>
                </TagHeader>
                {(tag.ops || []).map(([method, path, summary]) => (
                  <Operation key={method + path} $post={method === "POST"}>
                    <Method $post={method === "POST"}>{method}</Method>
                    <Path>{path}</Path>
                    <Summary>{summary}</Summary>
                  </Operation>
                ))}
              </section>
            ))}
          </Page>
        </Window>

        <Behind>
          <BehindCell $gap={10}>▪</BehindCell>
          <BehindCell>{"  "}Build completed successfully with 1 warning in 3 sec, 11 ms (2 minutes ago)</BehindCell>
          <Spacer />
          <BehindCell $gap={25}>36:1</BehindCell>
          <BehindCell $gap={28}>LF</BehindCell>
          <BehindCell $gap={26}>UTF-8</BehindCell>
          <BehindCell>2 spaces</BehindCell>
          <Lock />
          <BehindCell>⚙</BehindCell>
          <Memory>2048 of 2987M</Memory>
        </Behind>

        <Dock>
          {dock.map((group, g) => (
            <React.Fragment key={g}>
              {g > 0 && <DockRule />}
              {group.map(([Icon, dot], i) => (
                <DockItem key={i}><Icon />{dot ? <Dot $wide={dot === 2} /> : null}</DockItem>
              ))}
            </React.Fragment>
          ))}
        </Dock>
      </Desktop>
    </>
  );
}
